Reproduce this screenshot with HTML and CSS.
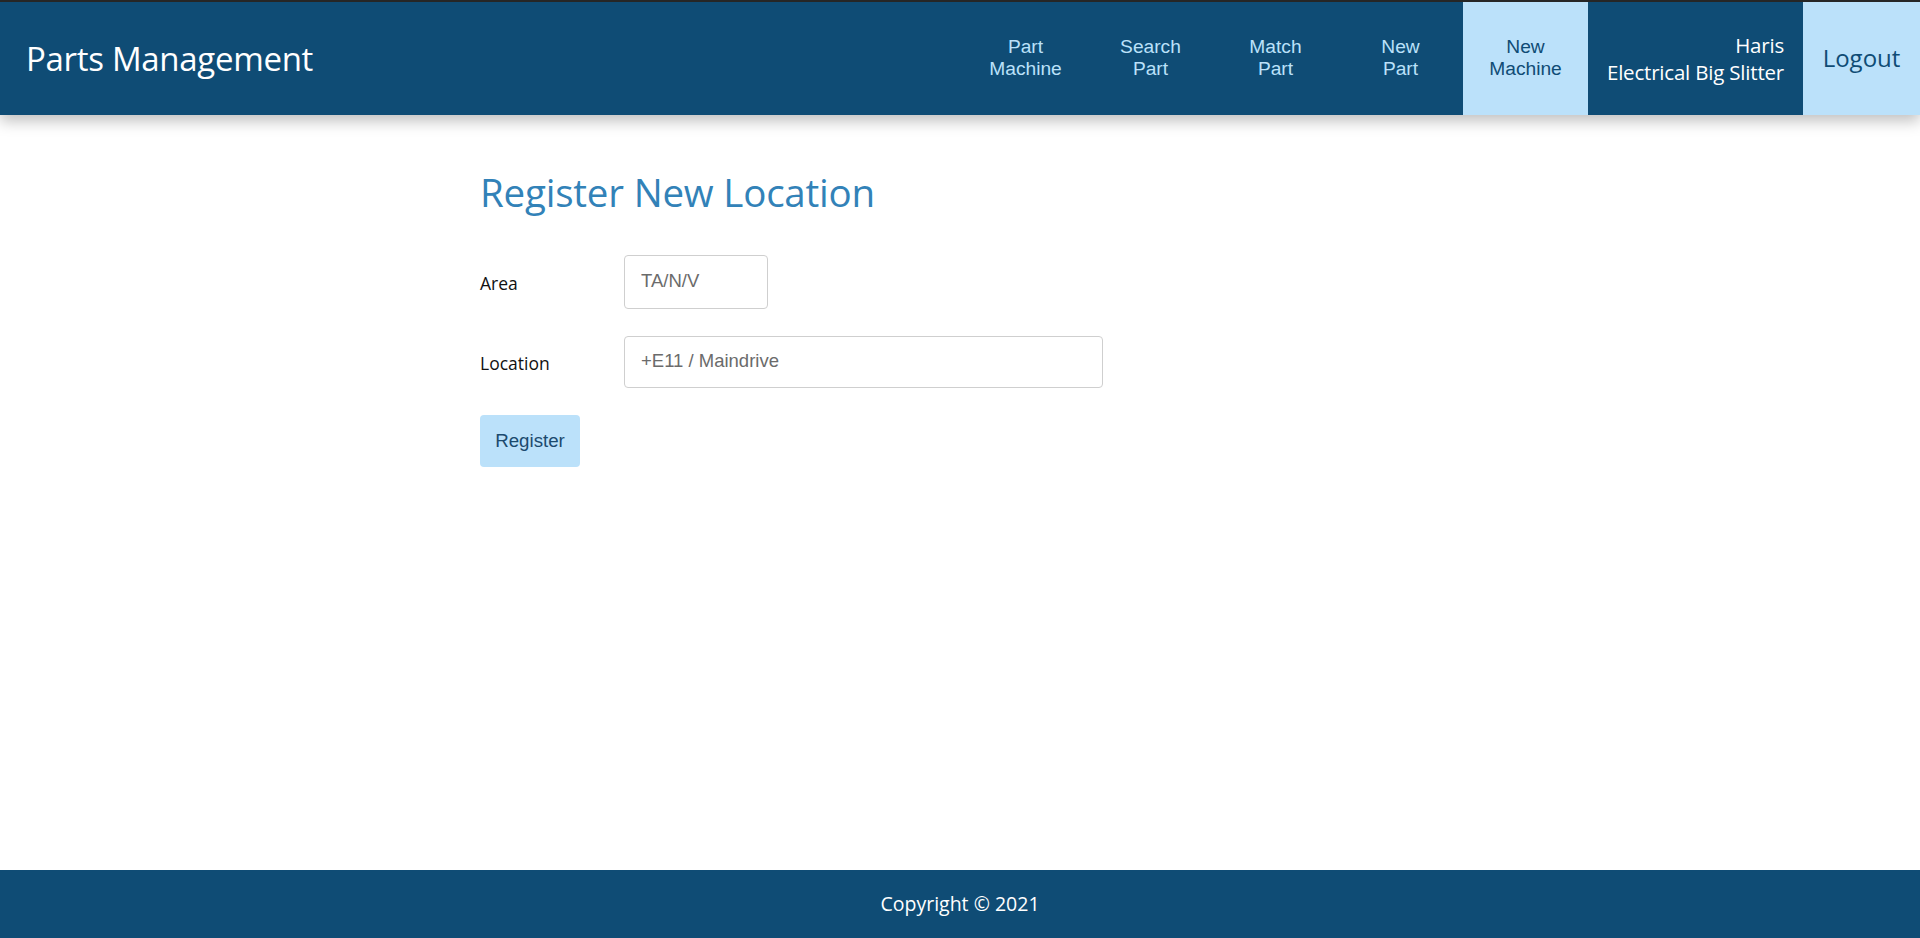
FILE: index.html
```html
<!DOCTYPE html>
<html lang="en">
<head>
<meta charset="utf-8">
<title>Parts Management</title>
<link rel="stylesheet" href="styles.css">
</head>
<body>
<header class="topbar">
  <div class="brand">Parts Management</div>
  <nav class="nav">
    <a class="nav-item" href="#">Part<br>Machine</a>
    <a class="nav-item" href="#">Search<br>Part</a>
    <a class="nav-item" href="#">Match<br>Part</a>
    <a class="nav-item" href="#">New<br>Part</a>
    <a class="nav-item active" href="#">New<br>Machine</a>
  </nav>
  <div class="user">
    <span>Haris</span>
    <span>Electrical Big Slitter</span>
  </div>
  <a class="logout" href="#">Logout</a>
</header>
<main class="main">
  <div class="container">
    <h1 class="title">Register New Location</h1>
    <form class="form">
      <div class="row row-area">
        <label class="label" for="area">Area</label>
        <input class="input input-area" id="area" type="text" placeholder="TA/N/V">
      </div>
      <div class="row row-loc">
        <label class="label" for="loc">Location</label>
        <input class="input input-loc" id="loc" type="text" placeholder="+E11 / Maindrive">
      </div>
      <button class="btn" type="button">Register</button>
    </form>
  </div>
</main>
<footer class="footer">Copyright © 2021</footer>
</body>
</html>
```

FILE: styles.css
```css
* { box-sizing: border-box; }
html, body { margin: 0; padding: 0; }
body {
  min-height: 100vh;
  display: flex;
  flex-direction: column;
  font-family: "Open Sans", "Noto Sans", sans-serif;
  background: #fff;
  color: #111;
}
.topbar {
  position: relative;
  z-index: 2;
  display: flex;
  align-items: stretch;
  height: 115px;
  border-top: 2px solid #262626;
  background: #0f4c75;
  box-shadow: 0 6px 14px rgba(0, 0, 0, 0.25);
}
.brand {
  display: flex;
  align-items: center;
  padding-left: 26px;
  color: #fff;
  font-size: 33px;
  letter-spacing: -0.3px;
}
.nav {
  display: flex;
  margin-left: auto;
}
.nav-item {
  width: 125px;
  display: flex;
  align-items: center;
  justify-content: center;
  text-align: center;
  font-family: "Liberation Sans", Arial, sans-serif;
  font-size: 19.2px;
  line-height: 21.5px;
  padding-bottom: 2px;
  color: #bbe1fa;
  text-decoration: none;
}
.nav-item.active {
  background: #bbe1fa;
  color: #0f4c75;
}
.user {
  display: flex;
  flex-direction: column;
  justify-content: center;
  align-items: flex-end;
  width: 215px;
  padding: 0 19px 0 10px;
  color: #fff;
  font-size: 20.5px;
  line-height: 27px;
  letter-spacing: -0.2px;
  white-space: nowrap;
}
.logout {
  display: flex;
  align-items: center;
  justify-content: center;
  width: 117px;
  background: #bbe1fa;
  color: #0f4c75;
  font-size: 24px;
  text-decoration: none;
  padding-bottom: 2px;
}
.main {
  flex: 1;
  padding-top: 55px;
}
.container {
  width: 960px;
  margin: 0 auto;
}
.title {
  margin: 0 0 40px;
  font-size: 38.5px;
  font-weight: 400;
  line-height: 45px;
  color: #3282b8;
  letter-spacing: -0.2px;
}
.form {
  display: flex;
  flex-direction: column;
  align-items: flex-start;
  gap: 27px;
}
.row {
  display: flex;
  align-items: center;
}
.label {
  width: 144px;
  font-size: 17.5px;
  color: #111;
  padding-top: 1px;
}
.input {
  border: 1px solid #cfcfcf;
  border-radius: 4px;
  padding: 0 16px;
  font-family: "Liberation Sans", Arial, sans-serif;
  font-size: 18.5px;
  color: #555;
  background: #fff;
  outline: none;
}
.input::placeholder { color: #6b6b6b; }
.input-area { width: 144px; height: 54px; padding-bottom: 2px; }
.input-loc { width: 479px; height: 52px; padding-bottom: 2px; }
.btn {
  width: 100px;
  height: 52px;
  border: none;
  border-radius: 4px;
  background: #bbe1fa;
  color: #1b4a6e;
  font-family: "Liberation Sans", Arial, sans-serif;
  font-size: 18.7px;
  padding: 0 0 1px;
}
.footer {
  height: 68px;
  display: flex;
  align-items: center;
  justify-content: center;
  background: #0f4c75;
  color: #fff;
  font-size: 19.5px;
  padding-bottom: 2px;
}
```
